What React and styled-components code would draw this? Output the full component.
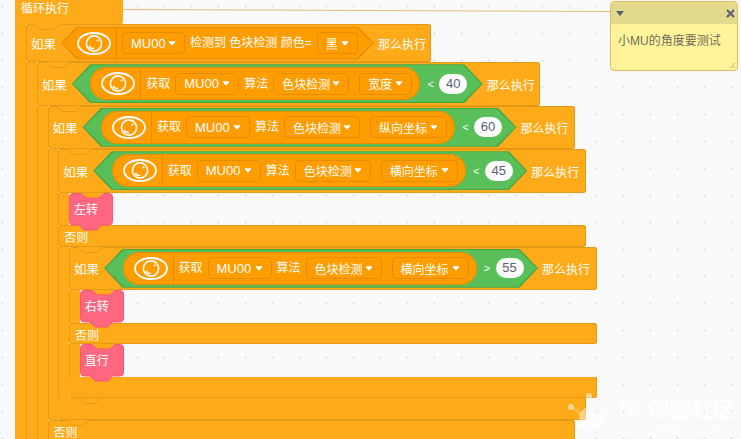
import React from "react";
import styled, { createGlobalStyle } from "styled-components";

const BLOCK = "#ffab19";
const EDGE = "#e39a17";
const REPORTER = "#ff9c00";
const REPORTER_EDGE = "#e58c00";
const GREEN = "#59c059";
const GREEN_EDGE = "#48a648";

const Global = createGlobalStyle`
  html, body { margin: 0; padding: 0; }
  body { font-family: "Liberation Sans", "Noto Sans CJK SC", sans-serif; font-size: 12px; }
`;

const Page = styled.div`
  position: relative;
  width: 741px;
  height: 439px;
  overflow: hidden;
  background-color: #f9f9f9;
  background-image: radial-gradient(circle at 2.5px 6.5px, #dcdcdc 0.7px, transparent 1.3px);
  background-size: 27px 27px;
`;

const Loop = styled.div`
  margin-left: 15px;
`;

const LoopHead = styled.div`
  width: 108px;
  height: 24px;
  box-sizing: border-box;
  padding: 2px 0 0 6px;
  background: ${BLOCK};
  color: #fff;
  line-height: 14px;
  border-bottom-right-radius: 2px;
`;

const Slot = styled.div`
  display: flex;
  align-items: stretch;
`;

const Arm = styled.div`
  flex: none;
  width: ${(p) => p.$width}px;
  box-sizing: border-box;
  background: ${BLOCK};
  border-left: 1px solid ${(p) => (p.$bare ? BLOCK : EDGE)};
`;

const SlotBody = styled.div`
  flex: none;
  min-height: 32px;
`;

const Wrap = styled.div`
  position: relative;
`;

const Head = styled.div`
  position: relative;
  display: flex;
  align-items: center;
  width: ${(p) => p.$width}px;
  height: ${(p) => p.$height}px;
  box-sizing: border-box;
  padding-left: 5px;
  background: ${BLOCK};
  border-radius: 3px;
  box-shadow: inset 0 0 0 1px ${EDGE};
  color: #fff;
`;

const Word = styled.span`
  flex: none;
  color: #fff;
  line-height: 14px;
  white-space: nowrap;
`;

const IfWord = styled(Word)`
  width: 25px;
  margin-right: 5px;
  font-size: 12.5px;
  padding-top: 4px;
`;

const ThenWord = styled(Word)`
  margin-left: 4px;
  padding-top: 4px;
`;

const ElseBar = styled.div`
  width: ${(p) => p.$width}px;
  height: 21.5px;
  box-sizing: border-box;
  padding: 6px 0 0 6px;
  background: ${BLOCK};
  border-radius: 3px;
  box-shadow: inset 0 0 0 1px ${EDGE};
  color: #fff;
  line-height: 14px;
`;

const Foot = styled.div`
  position: relative;
  width: ${(p) => p.$width}px;
  height: 21.5px;
  background: ${BLOCK};
  border-radius: 0 0 3px 3px;
  box-shadow: inset 0 -1px 0 ${EDGE}, inset -1px 0 0 ${EDGE};
`;

const Tab = styled.svg`
  position: absolute;
  left: ${(p) => p.$left}px;
  top: ${(p) => p.$top};
  width: 26px;
  height: 7px;
  overflow: visible;
  z-index: 2;
`;

const Hex = styled.div`
  position: relative;
  flex: none;
  display: flex;
  align-items: center;
  width: ${(p) => p.$width}px;
  height: ${(p) => p.$height}px;
  box-sizing: border-box;
  padding-left: ${(p) => p.$slope}px;
  background: ${(p) => p.$edge};
  clip-path: polygon(
    0 50%,
    ${(p) => p.$slope}px 0,
    calc(100% - ${(p) => p.$slope}px) 0,
    100% 50%,
    calc(100% - ${(p) => p.$slope}px) 100%,
    ${(p) => p.$slope}px 100%
  );
  &::before {
    content: "";
    position: absolute;
    inset: 1px 1.5px;
    background: ${(p) => p.$fill};
    clip-path: inherit;
  }
  & > * {
    position: relative;
  }
`;

const Capsule = styled.div`
  display: flex;
  align-items: center;
  height: 33px;
  box-sizing: border-box;
  padding: 0 8px 0 11px;
  gap: 5px;
  background: ${REPORTER};
  border-radius: 17px;
  box-shadow: inset 0 0 0 1px ${REPORTER_EDGE};
`;

const Row = styled.div`
  display: flex;
  align-items: center;
  gap: 5px;
  height: 100%;
`;

const Eye = styled.svg`
  flex: none;
  width: 34px;
  height: 23px;
`;

const Divider = styled.i`
  flex: none;
  align-self: stretch;
  width: 1px;
  background: ${REPORTER_EDGE};
`;

const Field = styled.div`
  flex: none;
  display: flex;
  align-items: center;
  justify-content: space-between;
  width: ${(p) => p.$width}px;
  height: 22px;
  box-sizing: border-box;
  padding: 0 8px;
  margin-left: ${(p) => p.$shift || 0}px;
  border: 1px solid ${REPORTER_EDGE};
  border-radius: 4px;
  color: #fff;
  font-size: ${(p) => (p.$latin ? 13 : 12)}px;
  white-space: nowrap;
`;

const Caret = styled.svg`
  flex: none;
  width: 8px;
  height: 5px;
`;

const Compare = styled.span`
  flex: none;
  width: 7px;
  margin-left: 7px;
  color: #fff;
  font-size: 11px;
  text-align: center;
`;

const Pill = styled.span`
  flex: none;
  width: 28px;
  height: 20px;
  margin-left: 5px;
  background: #fff;
  border-radius: 10px;
  color: #575e75;
  font-size: 13px;
  line-height: 20px;
  text-align: center;
`;

const Stack = styled.div`
  position: relative;
  z-index: 3;
  width: 44px;
  height: 32.5px;
`;

const StackShape = styled.svg`
  position: absolute;
  inset: 0;
  width: 44px;
  height: 38px;
  overflow: visible;
`;

const StackWord = styled.span`
  position: relative;
  display: block;
  padding: 10px 0 0 5px;
  color: #fff;
  line-height: 14px;
`;

const Link = styled.svg`
  position: absolute;
  left: 123px;
  top: 8px;
  width: 488px;
  height: 5px;
`;

const Note = styled.div`
  position: absolute;
  left: 610px;
  top: 1px;
  width: 128px;
  height: 70px;
  box-sizing: border-box;
  border: 1px solid #e6bb63;
  border-radius: 4px;
  background: #fff49a;
  overflow: hidden;
`;

const NoteBar = styled.div`
  display: flex;
  align-items: center;
  justify-content: space-between;
  height: 22px;
  padding: 0 2px 0 5px;
  background: #e3da8c;
`;

const NoteText = styled.div`
  padding: 10px 7px;
  color: #6f6d5c;
  line-height: 14px;
  white-space: nowrap;
`;

const Grip = styled.svg`
  position: absolute;
  right: 1px;
  bottom: 1px;
  width: 7px;
  height: 7px;
`;

const Mark = styled.div`
  position: absolute;
  left: 618px;
  top: 397px;
  color: rgba(255, 255, 255, 0.8);
`;

const MarkTitle = styled.div`
  font-size: 22px;
  font-weight: 700;
  line-height: 26px;
  white-space: nowrap;
`;

const MarkUrl = styled.div`
  font-size: 12px;
  line-height: 14px;
  white-space: nowrap;
`;

const MarkLogo = styled.svg`
  position: absolute;
  left: 565px;
  top: 392px;
  width: 45px;
  height: 42px;
`;

const EyeIcon = () => (
  <Eye viewBox="0 0 34 23" fill="none" stroke="#fff">
    <ellipse cx="17" cy="11.5" rx="16" ry="10.5" strokeWidth="1.8" />
    <circle cx="17" cy="11.5" r="7.6" strokeWidth="1.6" />
    <path d="M12.5 14.5c1 1.6 2.4 2.2 4 2" strokeWidth="1.5" strokeLinecap="round" />
    <circle cx="20.5" cy="8.5" r="1.1" fill="#fff" stroke="none" />
  </Eye>
);

const Dropdown = ({ width, shift, latin, children }) => (
  <Field $width={width} $shift={shift} $latin={latin}>
    {children}
    <Caret viewBox="0 0 8 5">
      <path d="M1 .8h6L4 4.2z" fill="#fff" stroke="#fff" strokeLinejoin="round" />
    </Caret>
  </Field>
);

// green "value compare value" condition
const Compared = ({ width, axis, axisWidth, op, value }) => (
  <Hex $width={width} $height={39} $slope={18.5} $fill={GREEN} $edge={GREEN_EDGE}>
    <Capsule>
      <EyeIcon />
      <Divider />
      <Word>获取</Word>
      <Dropdown width={64} latin>MU00</Dropdown>
      <Word>算法</Word>
      <Dropdown width={76}>色块检测</Dropdown>
      <Dropdown width={axisWidth} shift={5}>{axis}</Dropdown>
    </Capsule>
    <Compare>{op}</Compare>
    <Pill>{value}</Pill>
  </Hex>
);

const Detected = () => (
  <Hex $width={313} $height={33} $slope={16} $fill={REPORTER} $edge={REPORTER_EDGE}>
    <Row>
      <EyeIcon />
      <Divider />
      <Dropdown width={63} latin>MU00</Dropdown>
      <Word>检测到 色块检测 颜色=</Word>
      <Dropdown width={41}>黑</Dropdown>
    </Row>
  </Hex>
);

const TurnBlock = ({ children }) => (
  <Stack>
    <StackShape viewBox="0 0 44 38">
      <path d="M12 0h23l-5 5H17z" fill={BLOCK} />
      <path
        d="M4 .5H12L17 5H30L35 .5H40Q43.5.5 43.5 4V28.500Q43.500 32 40 32H32L28 37H15L10 32H4Q.5 32 .5 28.500V4Q.5.5 4 .5Z"
        fill="#ff6680"
        stroke="#ff5573"
      />
    </StackShape>
    <StackWord>{children}</StackWord>
  </Stack>
);

const IfBlock = ({ width, headHeight = 43.5, condition, then, otherwise }) => (
  <Wrap>
    <Head $width={width} $height={headHeight}>
      <IfWord>如果</IfWord>
      {condition}
      <ThenWord>那么执行</ThenWord>
    </Head>
    <Tab $left={9} $top="0" viewBox="0 0 26 7">
      <path d="M0 0l5 5.500h14L25 0" fill={BLOCK} stroke={EDGE} />
    </Tab>
    <Slot>
      <Arm $width={10.75} />
      <SlotBody>{then}</SlotBody>
    </Slot>
    {otherwise && (
      <>
        <ElseBar $width={width}>否则</ElseBar>
        <Slot>
          <Arm $width={10.75} />
          <SlotBody>{otherwise}</SlotBody>
        </Slot>
      </>
    )}
    <Foot $width={width}>
      <Tab $left={10} $top="100%" viewBox="0 0 26 7">
        <path d="M0 0l5 5.500h11L21 0" fill={BLOCK} stroke={EDGE} />
      </Tab>
    </Foot>
  </Wrap>
);

export default function App() {
  const inner = (
    <IfBlock
      width={528}
      condition={<Compared width={434} axis="横向坐标" axisWidth={77} op=">" value="55" />}
      then={<TurnBlock>右转</TurnBlock>}
      otherwise={<TurnBlock>直行</TurnBlock>}
    />
  );

  const third = (
    <IfBlock
      width={527.5}
      condition={<Compared width={434} axis="横向坐标" axisWidth={77} op="<" value="45" />}
      then={<TurnBlock>左转</TurnBlock>}
      otherwise={inner}
    />
  );

  const second = (
    <IfBlock
      width={527}
      condition={<Compared width={434} axis="纵向坐标" axisWidth={77} op="<" value="60" />}
      then={third}
      otherwise={<SlotBody />}
    />
  );

  const first = (
    <IfBlock
      width={503.5}
      condition={<Compared width={411} axis="宽度" axisWidth={53} op="<" value="40" />}
      then={second}
    />
  );

  return (
    <Page>
      <Global />
      <Loop>
        <LoopHead>循环执行</LoopHead>
        <Slot>
          <Arm $width={11} $bare />
          <SlotBody>
            <IfBlock width={405} headHeight={38} condition={<Detected />} then={first} />
          </SlotBody>
        </Slot>
      </Loop>

      <Link viewBox="0 0 488 5">
        <path d="M0 1.500L487 3.500" stroke="#e4bd79" strokeWidth="1" fill="none" />
      </Link>

      <Note>
        <NoteBar>
          <svg width="8" height="5" viewBox="0 0 8 5">
            <path d="M0 0h8L4 5z" fill="#575e75" />
          </svg>
          <svg width="9" height="9" viewBox="0 0 9 9">
            <path d="M1 1l7 7M8 1L1 8" stroke="#575e75" strokeWidth="2" />
          </svg>
        </NoteBar>
        <NoteText>小MU的角度要测试</NoteText>
        <Grip viewBox="0 0 7 7">
          <path d="M1 6l5-5M4 6l2-2" stroke="#b9b27a" strokeWidth="1" />
        </Grip>
      </Note>

      <MarkLogo viewBox="0 0 45 42">
        <g fill="#fff" fillOpacity="0.45" stroke="#fff" strokeOpacity="0.5">
          <circle cx="6" cy="15" r="2.500" />
          <circle cx="24" cy="4" r="2.500" />
          <path d="M8 16l7 5M24 6v8" fill="none" />
          <path d="M15 21l9-7 7 6-2 11-14 2z" />
        </g>
        <path d="M10 32l18-2 8-10 6-3-4 12-7 10H14z" fill="#fff" fillOpacity="0.6" />
      </MarkLogo>
      <Mark>
        <MarkTitle>DF创客社区</MarkTitle>
        <MarkUrl>www.DFRobot.com.cn</MarkUrl>
      </Mark>
    </Page>
  );
}
